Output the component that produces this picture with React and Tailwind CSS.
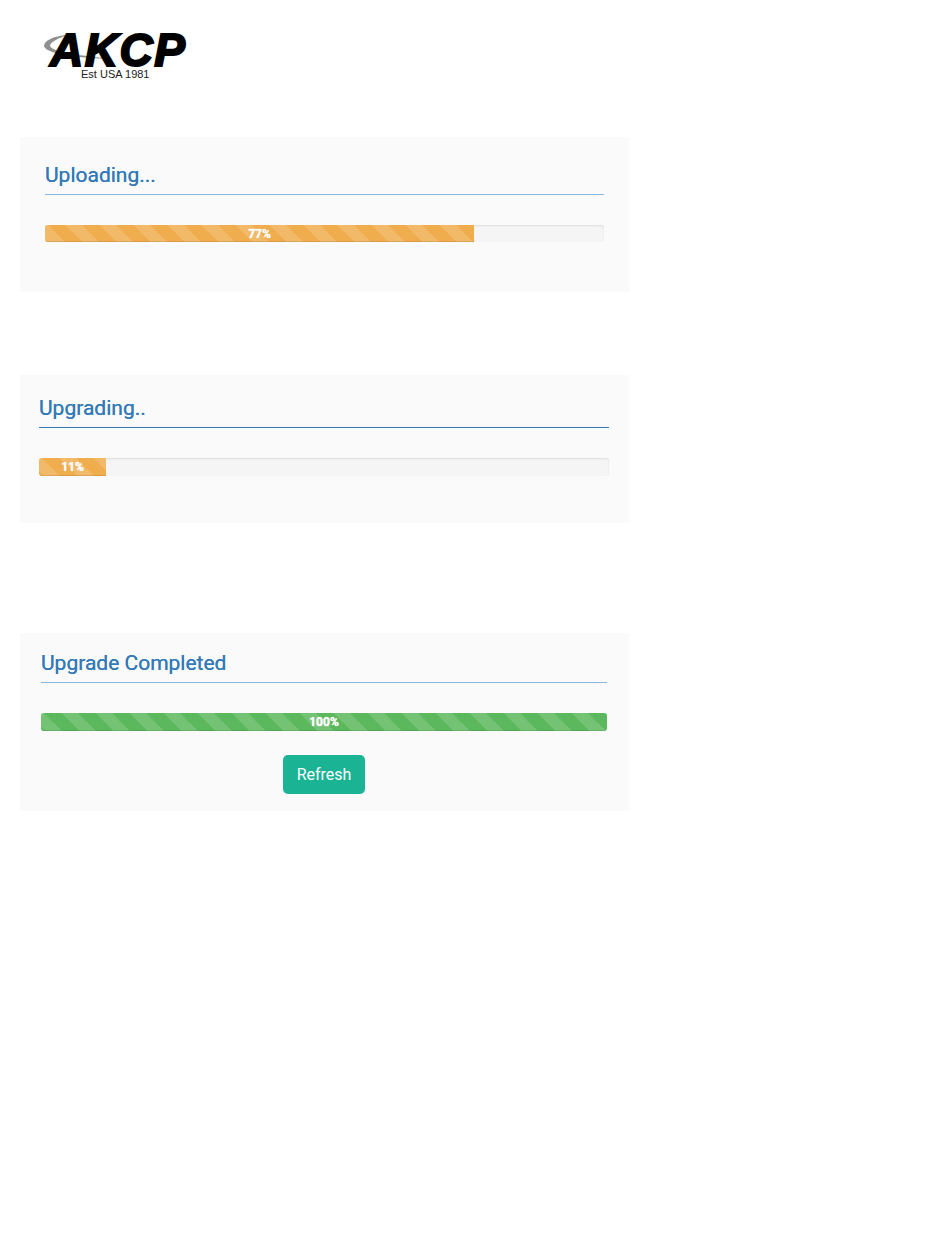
import React from 'react';

function Logo() {
  return (
    <div className="h-[137px] pl-[25px] pt-[32px] font-['Liberation_Sans',sans-serif]">
      <div className="relative w-[146px]">
        <svg className="absolute -left-[2px] top-[2px]" width="72" height="26" viewBox="0 0 72 26">
          <path d="M 24 1 C 10 2 1 7 1 12 C 2 19 30 24 70 25 C 40 22 9 18 7 12 C 7 8 16 4 24 1 Z" fill="#8f8f8f" />
        </svg>
        <div className="relative h-[37px] pl-[5px] text-[46px] leading-[37px] font-bold italic tracking-[1.5px] text-black [-webkit-text-stroke:2px_black]">AKCP</div>
        <div className="pl-[36px] text-[11px] leading-[11px] text-[#222]">Est USA 1981</div>
      </div>
    </div>
  );
}

function Bar({ label, fill, width, height }) {
  return (
    <div className={`${height} rounded-[3px] bg-[#f5f5f5] shadow-[inset_0_1px_2px_rgba(0,0,0,0.1)] overflow-hidden`}>
      <div
        className={`h-full ${fill} ${width} border-b border-black/10 bg-[linear-gradient(45deg,rgba(255,255,255,0.15)_25%,transparent_25%,transparent_50%,rgba(255,255,255,0.15)_50%,rgba(255,255,255,0.15)_75%,transparent_75%,transparent)] bg-[length:34px_34px] bg-[position:20px_0] text-center text-[12px] leading-[18px] font-bold text-white [text-shadow:0_0_1px_white]`}
      >
        {label}
      </div>
    </div>
  );
}

export default function App() {
  return (
    <div className="min-h-screen bg-white pl-[20px] font-['Roboto',sans-serif]">
      <Logo />

      {/* Uploading */}
      <div className="w-[609px] h-[155px] bg-[#fafafa] pl-[25px] pr-[25px] pt-[25px]">
        <h2 className="h-[33px] text-[21px] leading-[27px] text-[#337ab7] [text-shadow:0_0_0.5px_#337ab7] border-b border-[#8db9de]">Uploading...</h2>
        <div className="mt-[30px]">
          <Bar label="77%" fill="bg-[#f0ad4e]" width="w-[429px]" height="h-[17px]" />
        </div>
      </div>

      {/* Upgrading */}
      <div className="mt-[83px] w-[609px] h-[148px] bg-[#fafafa] pl-[19px] pr-[20px] pt-[20px]">
        <h2 className="h-[33px] text-[21px] leading-[27px] text-[#337ab7] [text-shadow:0_0_0.5px_#337ab7] border-b border-[#337ab7]">Upgrading..</h2>
        <div className="mt-[30px]">
          <Bar label="11%" fill="bg-[#f0ad4e]" width="w-[67px]" height="h-[18px]" />
        </div>
      </div>

      {/* Completed */}
      <div className="mt-[110px] w-[609px] h-[178px] bg-[#fafafa] pl-[21px] pr-[22px] pt-[17px]">
        <h2 className="h-[33px] text-[21px] leading-[27px] text-[#337ab7] [text-shadow:0_0_0.5px_#337ab7] border-b border-[#8db9de]">Upgrade Completed</h2>
        <div className="mt-[30px]">
          <Bar label="100%" fill="bg-[#5cb85c]" width="w-full" height="h-[18px]" />
        </div>
        <div className="mt-[24px] flex justify-center">
          <button className="w-[82px] h-[39px] rounded-[5px] bg-[#1ab394] text-white text-[16px]">Refresh</button>
        </div>
      </div>
    </div>
  );
}
